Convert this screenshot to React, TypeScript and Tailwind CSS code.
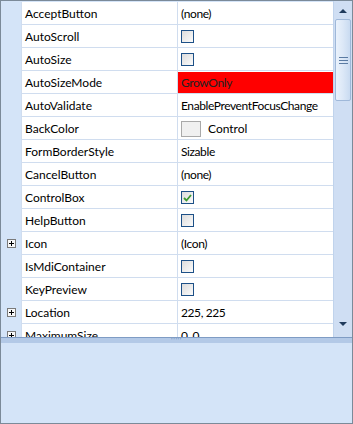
type Row = {
  name: string;
  value?: string;
  kind?: "text" | "check" | "checked" | "color" | "red";
  expand?: boolean;
};

const rows: Row[] = [
  { name: "AcceptButton", value: "(none)" },
  { name: "AutoScroll", kind: "check" },
  { name: "AutoSize", kind: "check" },
  { name: "AutoSizeMode", value: "GrowOnly", kind: "red" },
  { name: "AutoValidate", value: "EnablePreventFocusChange" },
  { name: "BackColor", value: "Control", kind: "color" },
  { name: "FormBorderStyle", value: "Sizable" },
  { name: "CancelButton", value: "(none)" },
  { name: "ControlBox", kind: "checked" },
  { name: "HelpButton", kind: "check" },
  { name: "Icon", value: "(Icon)", expand: true },
  { name: "IsMdiContainer", kind: "check" },
  { name: "KeyPreview", kind: "check" },
  { name: "Location", value: "225, 225", expand: true },
  { name: "MaximumSize", value: "0, 0", expand: true },
];

function CheckBox({ checked }: { checked?: boolean }) {
  return (
    <div className="w-[13px] h-[13px] border border-[#1d5087] bg-gradient-to-br from-[#dcdcdc] to-[#fbfbfb] flex items-center justify-center">
      {checked && (
        <svg width="9" height="8" viewBox="0 0 9 8">
          <path d="M1 4 L3.5 6.5 L8 1" stroke="#3c9a30" strokeWidth="1.8" fill="none" />
        </svg>
      )}
    </div>
  );
}

function PlusBox() {
  return (
    <div className="w-[9px] h-[9px] border border-[#7a7a7a] bg-[#f7f7f7] relative">
      <div className="absolute left-[1px] top-[3px] w-[5px] h-px bg-black" />
      <div className="absolute left-[3px] top-[1px] w-px h-[5px] bg-black" />
    </div>
  );
}

function ValueCell({ row }: { row: Row }) {
  const k = row.kind ?? "text";
  if (k === "check" || k === "checked") {
    return (
      <div className="flex-1 h-full flex items-center pl-[3px]">
        <CheckBox checked={k === "checked"} />
      </div>
    );
  }
  if (k === "color") {
    return (
      <div className="flex-1 h-full flex items-center pl-[3px] gap-[7px]">
        <div className="w-[20px] h-[16px] border border-[#a9a9a9] bg-[#f0f0f0]" />
        <span>{row.value}</span>
      </div>
    );
  }
  return (
    <div className={"flex-1 h-full flex items-center pl-[3px] " + (k === "red" ? "bg-[#ff0000] text-[#222]" : "")}>
      <span className="whitespace-nowrap tracking-[-0.4px]">{row.value}</span>
    </div>
  );
}

export default function App() {
  return (
    <div
      className="w-[353px] h-[424px] border border-[#7b8a99] flex flex-col bg-[#d4e4f8] text-[12px] text-black"
      style={{ fontFamily: "Lato, 'Noto Sans', sans-serif" }}
    >
      <div className="h-[336px] flex overflow-hidden">
        <div className="flex-1 flex flex-col overflow-hidden pt-px bg-[#d4e4f8]">
          {rows.map((r) => (
            <div key={r.name} className="flex h-[23px] shrink-0">
              <div className="w-[20px] h-full flex items-center justify-center bg-[#d4e4f8]">
                {r.expand && <PlusBox />}
              </div>
              <div className="w-[157px] h-full bg-white border-l border-r border-b border-[#d0ddef] flex items-center pl-[3px] pt-[2px]">
                <span className="whitespace-nowrap">{r.name}</span>
              </div>
              <div className="w-[155px] h-full bg-white border-b border-[#d0ddef] flex pt-[1px]">
                <ValueCell row={r} />
              </div>
            </div>
          ))}
        </div>
        <div className="w-[19px] flex flex-col bg-[#cfdef3] border-l border-[#c0d3ec]">
          <div className="h-[18px] flex items-center justify-center">
            <svg width="8" height="5" viewBox="0 0 8 5">
              <path d="M0 5 L4 1 L8 5 Z" fill="#1f3a5c" />
            </svg>
          </div>
          <div className="mx-px h-[82px] rounded-[2px] border border-[#9fb8d9] bg-gradient-to-r from-[#eaf2fc] via-[#dce8f7] to-[#c9dbf1] flex items-center justify-center">
            <div className="flex flex-col gap-[2px]">
              <div className="w-[9px] h-px bg-[#5a7ba3]" />
              <div className="w-[9px] h-px bg-[#5a7ba3]" />
              <div className="w-[9px] h-px bg-[#5a7ba3]" />
            </div>
          </div>
          <div className="flex-1" />
          <div className="h-[18px] flex items-center justify-center mb-[4px]">
            <svg width="8" height="5" viewBox="0 0 8 5">
              <path d="M0 0 L4 4 L8 0 Z" fill="#1f3a5c" />
            </svg>
          </div>
        </div>
      </div>
      <div className="h-[6px] bg-[#b3c9e7] border-t border-[#7f9cc4] flex justify-center">
        <div className="text-[6px] leading-[4px] text-[#5577aa] tracking-[1px] italic">'''''</div>
      </div>
      <div className="flex-1 bg-[#d4e4f8]" />
    </div>
  );
}
